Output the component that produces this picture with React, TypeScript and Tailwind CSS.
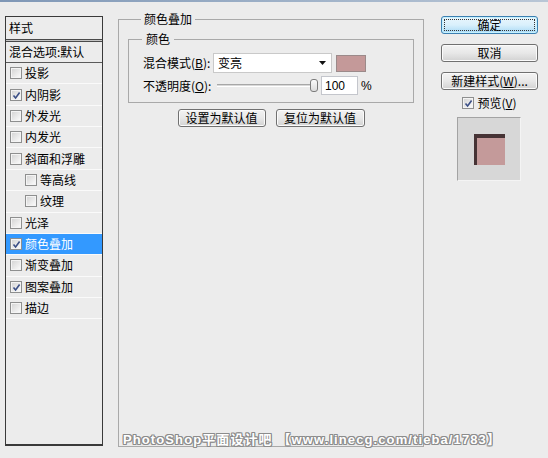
import React from "react";

function Check({ checked }: { checked?: boolean }) {
  return (
    <span className="relative inline-flex w-[12px] h-[12px] shrink-0 border border-[#8e8f8f] bg-[#f4f4f4]">
      <span className="absolute inset-[1px] bg-gradient-to-br from-[#d6d6d6] to-[#f9f9f9]" />
      {checked && (
        <svg className="absolute left-[1px] top-[1px]" width="9" height="9" viewBox="0 0 9 9">
          <path d="M1.5 4.5 L3.6 7 L7.6 1.5" fill="none" stroke="#3b4f86" strokeWidth="1.6" />
        </svg>
      )}
    </span>
  );
}

const items: { label: string; checked?: boolean; indent?: boolean; selected?: boolean }[] = [
  { label: "投影" },
  { label: "内阴影", checked: true },
  { label: "外发光" },
  { label: "内发光" },
  { label: "斜面和浮雕" },
  { label: "等高线", indent: true },
  { label: "纹理", indent: true },
  { label: "光泽" },
  { label: "颜色叠加", checked: true, selected: true },
  { label: "渐变叠加" },
  { label: "图案叠加", checked: true },
  { label: "描边" },
];

function Btn({ children, w }: { children: React.ReactNode; w: string }) {
  return (
    <div
      className={`${w} h-[18px] flex items-center justify-center rounded-[3px] border border-[#707070] bg-gradient-to-b from-[#f3f3f3] via-[#e8e8e8] to-[#d2d2d2] shadow-[inset_0_0_0_1px_#fbfbfb] leading-none`}
    >
      {children}
    </div>
  );
}

export default function App() {
  return (
    <div className="relative w-[548px] h-[458px] overflow-hidden bg-[#ececec] text-[12px] text-black font-['Noto_Sans_CJK_SC','Noto_Sans',sans-serif]">
      <div className="h-[2px] bg-gradient-to-r from-[#7f97b6] via-[#9db0c7] to-[#b9c6d6]" />
      <div className="flex pt-[14px] pl-[5px]">
        {/* left panel */}
        <div className="w-[98px] h-[430px] border border-b-2 border-[#3a3a3a] flex flex-col">
          <div className="h-[22px] flex items-center pl-[3px] leading-none">样式</div>
          <div className="h-[3px] border-y border-[#4a4a4a] bg-[#c4c4c4]" />
          <div className="h-[21px] flex items-center pl-[3px] border-b border-[#5a5a5a] leading-none">混合选项:默认</div>
          {items.map((it) => (
            <div
              key={it.label}
              className={`h-[21.36px] flex items-center gap-[3px] border-b border-[#fafafa] leading-none ${
                it.indent ? "pl-[19px]" : "pl-[4px]"
              } ${it.selected ? "bg-[#3399ff] text-white" : ""}`}
            >
              <Check checked={it.checked} />
              <span>{it.label}</span>
            </div>
          ))}
        </div>

        {/* middle group */}
        <div className="ml-[15px] w-[306px] -mt-[5px]">
          <fieldset className="h-[436px] border border-[#a9a9a9] px-[9px]">
            <legend className="ml-[13px] px-[3px] leading-[16px]">颜色叠加</legend>
            <fieldset className="mt-[4px] h-[72px] border border-[#a9a9a9] pl-[14px]">
              <legend className="ml-[-1px] px-[4px] leading-[16px]">颜色</legend>
              <div className="mt-[6px] flex items-center h-[20px]">
                <span className="w-[70px] leading-none">
                  混合模式(<span className="underline">B</span>):
                </span>
                <div className="w-[119px] h-[20px] bg-white border border-[#c9c9c9] flex items-center pl-[4px] pr-[5px] leading-none">
                  <span className="flex-1">变亮</span>
                  <svg width="7" height="4" viewBox="0 0 7 4">
                    <path d="M0 0 H7 L3.5 4 Z" fill="#111" />
                  </svg>
                </div>
                <div className="ml-[4px] w-[30px] h-[17px] bg-[#c49999] border border-[#9b8a8a]" />
              </div>
              <div className="mt-[3px] flex items-center h-[19px]">
                <span className="w-[74px] leading-none">
                  不透明度(<span className="underline">O</span>):
                </span>
                <div className="relative w-[101px] h-[14px] flex items-center">
                  <div className="w-[94px] h-[3px] border-t border-[#a7a7a7] border-b border-b-white bg-[#d8d8d8]" />
                  <div className="absolute left-[93px] top-[0px] w-[8px] h-[13px] rounded-[3px] border border-[#7c7c7c] bg-gradient-to-b from-[#fbfbfb] to-[#dcdcdc]" />
                </div>
                <div className="ml-[3px] w-[37px] h-[19px] bg-white border border-[#c4c6cc] flex items-center pl-[3px] font-['Liberation_Sans',sans-serif] text-[12px] leading-none">
                  100
                </div>
                <span className="ml-[3px] font-['Liberation_Sans',sans-serif] leading-none">%</span>
              </div>
            </fieldset>
            <div className="mt-[6px] flex justify-center gap-[10px]">
              <Btn w="w-[88px]">设置为默认值</Btn>
              <Btn w="w-[89px]">复位为默认值</Btn>
            </div>
          </fieldset>
        </div>

        {/* right column */}
        <div className="ml-[17px] w-[97px] flex flex-col">
          <div className="relative h-[18px] flex items-center justify-center rounded-[3px] border border-[#3c7fb1] bg-gradient-to-b from-[#eaf6fd] via-[#d9f0fc] to-[#a7d9f5] shadow-[inset_0_0_0_1px_#c5f1fe] leading-none">
            <span className="absolute inset-[2px] border border-dotted border-[#333]" />
            确定
          </div>
          <div className="mt-[10px]">
            <Btn w="w-[97px]">取消</Btn>
          </div>
          <div className="mt-[10px]">
            <Btn w="w-[97px]">
              新建样式(<span className="underline">W</span>)...
            </Btn>
          </div>
          <div className="mt-[6px] h-[14px] flex items-center justify-center gap-[3px] leading-none">
            <Check checked />
            <span>
              预览(<span className="underline">V</span>)
            </span>
          </div>
          <div className="mt-[7px] ml-[16px] w-[64px] h-[64px] bg-[#d7d7d7] border border-[#a3a3a3] border-r-[#f4f4f4] border-b-[#f4f4f4] flex items-center justify-center">
            <div className="w-[31px] h-[31px] bg-[#c49a9a] border-t-[4px] border-l-[3px] border-[#463335]" />
          </div>
        </div>
      </div>

      <div className="absolute left-[123px] top-[432px] whitespace-nowrap text-white font-bold text-[13px] tracking-[1.1px] leading-[16px] font-['Liberation_Sans','Noto_Sans_CJK_SC',sans-serif] [text-shadow:1px_0_#8c8c8c,-1px_0_#8c8c8c,0_1px_#8c8c8c,0_-1px_#8c8c8c,1px_1px_#8c8c8c,-1px_-1px_#8c8c8c,1px_-1px_#8c8c8c,-1px_1px_#8c8c8c]">
        PhotoShop平面设计吧 【www.linecg.com/tieba/1783】
      </div>
    </div>
  );
}
